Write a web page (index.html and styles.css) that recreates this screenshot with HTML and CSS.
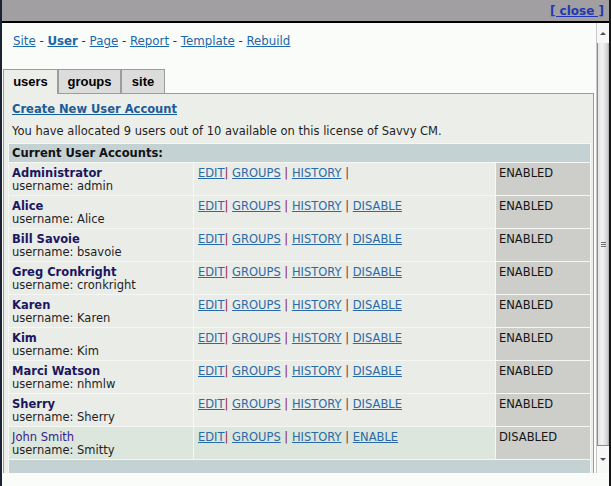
FILE: index.html
```html
<!DOCTYPE html>
<html>
<head>
<meta charset="utf-8">
<link rel="stylesheet" href="styles.css">
</head>
<body>
<div class="window">
  <div class="titlebar"><a class="close" href="#">[ close ]</a></div>
  <div class="frame">
    <div class="content">
      <div class="crumbs">
        <a href="#">Site</a> - <a href="#" class="current">User</a> - <a href="#">Page</a> - <a href="#">Report</a> - <a href="#">Template</a> - <a href="#">Rebuild</a>
      </div>
      <div class="tabs">
        <div class="tab tab-users active">users</div>
        <div class="tab tab-groups">groups</div>
        <div class="tab tab-site">site</div>
      </div>
      <div class="panel">
        <a class="create" href="#">Create New User Account</a>
        <p class="alloc">You have allocated 9 users out of 10 available on this license of Savvy CM.</p>
        <table class="users">
          <tr><th colspan="3">Current User Accounts:</th></tr>
          <tr>
            <td class="who"><span class="name">Administrator</span><br>username: admin</td>
            <td class="acts"><a href="#">EDIT</a><span class="sep">|</span> <a href="#">GROUPS</a> <span class="sep">|</span> <a href="#">HISTORY</a> <span class="sep">|</span></td>
            <td class="status">ENABLED</td>
          </tr>
          <tr>
            <td class="who"><span class="name">Alice</span><br>username: Alice</td>
            <td class="acts"><a href="#">EDIT</a><span class="sep">|</span> <a href="#">GROUPS</a> <span class="sep">|</span> <a href="#">HISTORY</a> <span class="sep">|</span> <a href="#">DISABLE</a></td>
            <td class="status">ENABLED</td>
          </tr>
          <tr>
            <td class="who"><span class="name">Bill Savoie</span><br>username: bsavoie</td>
            <td class="acts"><a href="#">EDIT</a><span class="sep">|</span> <a href="#">GROUPS</a> <span class="sep">|</span> <a href="#">HISTORY</a> <span class="sep">|</span> <a href="#">DISABLE</a></td>
            <td class="status">ENABLED</td>
          </tr>
          <tr>
            <td class="who"><span class="name">Greg Cronkright</span><br>username: cronkright</td>
            <td class="acts"><a href="#">EDIT</a><span class="sep">|</span> <a href="#">GROUPS</a> <span class="sep">|</span> <a href="#">HISTORY</a> <span class="sep">|</span> <a href="#">DISABLE</a></td>
            <td class="status">ENABLED</td>
          </tr>
          <tr>
            <td class="who"><span class="name">Karen</span><br>username: Karen</td>
            <td class="acts"><a href="#">EDIT</a><span class="sep">|</span> <a href="#">GROUPS</a> <span class="sep">|</span> <a href="#">HISTORY</a> <span class="sep">|</span> <a href="#">DISABLE</a></td>
            <td class="status">ENABLED</td>
          </tr>
          <tr>
            <td class="who"><span class="name">Kim</span><br>username: Kim</td>
            <td class="acts"><a href="#">EDIT</a><span class="sep">|</span> <a href="#">GROUPS</a> <span class="sep">|</span> <a href="#">HISTORY</a> <span class="sep">|</span> <a href="#">DISABLE</a></td>
            <td class="status">ENABLED</td>
          </tr>
          <tr>
            <td class="who"><span class="name">Marci Watson</span><br>username: nhmlw</td>
            <td class="acts"><a href="#">EDIT</a><span class="sep">|</span> <a href="#">GROUPS</a> <span class="sep">|</span> <a href="#">HISTORY</a> <span class="sep">|</span> <a href="#">DISABLE</a></td>
            <td class="status">ENABLED</td>
          </tr>
          <tr>
            <td class="who"><span class="name">Sherry</span><br>username: Sherry</td>
            <td class="acts"><a href="#">EDIT</a><span class="sep">|</span> <a href="#">GROUPS</a> <span class="sep">|</span> <a href="#">HISTORY</a> <span class="sep">|</span> <a href="#">DISABLE</a></td>
            <td class="status">ENABLED</td>
          </tr>
          <tr class="disabled">
            <td class="who"><span class="name">John Smith</span><br>username: Smitty</td>
            <td class="acts"><a href="#">EDIT</a><span class="sep">|</span> <a href="#">GROUPS</a> <span class="sep">|</span> <a href="#">HISTORY</a> <span class="sep">|</span> <a href="#">ENABLE</a></td>
            <td class="status">DISABLED</td>
          </tr>
          <tr><td class="foot" colspan="3"></td></tr>
        </table>
      </div>
    </div>
    <div class="scrollbar">
      <div class="sb-btn sb-up"><span class="arrow-up"></span></div>
      <div class="sb-track"><div class="sb-thumb"><span class="grip"></span></div></div>
      <div class="sb-btn sb-down"><span class="arrow-down"></span></div>
    </div>
  </div>
  <div class="bottom"></div>
</div>
</body>
</html>
```
FILE: styles.css
```css
* { box-sizing: border-box; }
html, body { margin: 0; padding: 0; }
body {
  width: 611px;
  height: 486px;
  overflow: hidden;
  background: #fafcf9;
  font-family: "DejaVu Sans", Verdana, sans-serif;
  color: #1a1a1a;
}
.window {
  width: 611px;
  height: 486px;
  border-left: 2px solid #1c2232;
  border-right: 2px solid #161616;
  display: flex;
  flex-direction: column;
  background: #fafcf9;
}
.titlebar {
  height: 23px;
  flex: none;
  background: #a19fa1;
  border-bottom: 2px solid #000;
  display: flex;
  justify-content: flex-end;
  align-items: center;
  padding-right: 5px;
}
.close {
  font-weight: bold;
  font-size: 12px;
  line-height: 14px;
  color: #2338b4;
  text-decoration: underline;
}
.frame {
  height: 450px;
  flex: none;
  display: flex;
}
.content {
  flex: 1;
  overflow: hidden;
  background: #fafcf9;
}
.crumbs {
  padding: 11px 0 0 11px;
  font-size: 11.8px;
  line-height: 14px;
  color: #333;
}
.crumbs a { color: #1a68aa; text-decoration: underline; }
.crumbs a.current { font-weight: bold; }
.tabs {
  display: flex;
  height: 24px;
  margin: 21px 0 0 1px;
  align-items: flex-start;
}
.tab {
  height: 24px;
  border: 1px solid #9c9c9c;
  border-bottom: none;
  background: #dcdcdc;
  font-family: "Liberation Sans", Arial, sans-serif;
  font-weight: bold;
  font-size: 13px;
  line-height: 23px;
  text-align: center;
  color: #000;
}
.tab-users { width: 55px; }
.tab-groups { width: 63px; }
.tab-site { width: 44px; }
.tab.active {
  background: #eceeea;
  height: 25px;
  position: relative;
  z-index: 1;
}
.panel {
  margin: 0 2px 0 1px;
  border: 1px solid #9c9c9c;
  background: #eceeea;
  padding-top: 8px;
  height: 400px;
}
.create {
  display: block;
  margin-left: 8px;
  font-weight: bold;
  font-size: 11.5px;
  line-height: 14px;
  color: #1a5c98;
  text-decoration: underline;
}
.alloc {
  margin: 8px 0 0 8px;
  font-size: 11.5px;
  line-height: 14px;
  color: #1e1e1e;
}
.users {
  margin: 5px 0 0 4px;
  width: 583px;
  border-collapse: separate;
  border-spacing: 1px;
  background: #f5f7f4;
  font-size: 11.5px;
  line-height: 13px;
}
.users th {
  height: 18px;
  padding: 0 3px;
  background: #c4d2d4;
  text-align: left;
  font-weight: bold;
  color: #111;
}
.users td {
  height: 32px;
  padding: 4px 3px 0;
  vertical-align: top;
  background: #eaece8;
  color: #1e1e1e;
}
.users td.who { width: 184px; }
.users td.acts { width: 301px; padding-left: 4px; }
.users td.status { width: 94px; background: #cdcec9; color: #151515; }
.name { font-weight: bold; color: #1b1660; }
.acts a { color: #2a6aa6; text-decoration: underline; }
.sep { color: #8a1f45; }
.disabled td.who, .disabled td.acts { background: #dce6dc; }
.disabled .name { font-weight: normal; color: #3a1c8c; }
.users td.foot { height: 30px; background: #c4d2d4; padding: 0; }
.scrollbar {
  width: 13px;
  flex: none;
  display: flex;
  flex-direction: column;
  background: #f4f4f4;
  border-left: 1px solid #c8c8c8;
}
.sb-btn {
  display: flex;
  align-items: center;
  justify-content: center;
  background: #f7f7f7;
}
.sb-up { height: 20px; }
.sb-down { height: 27px; }
.arrow-up {
  width: 0; height: 0;
  border-left: 3px solid transparent;
  border-right: 3px solid transparent;
  border-bottom: 3px solid #505050;
}
.arrow-down {
  width: 0; height: 0;
  border-left: 3px solid transparent;
  border-right: 3px solid transparent;
  border-top: 3px solid #505050;
}
.sb-track { flex: 1; display: flex; }
.sb-thumb {
  flex: 1;
  border-left: 1px solid #8c8c8c;
  border-bottom: 1px solid #8c8c8c;
  background: linear-gradient(to right, #e4e4e4, #f4f4f4 40%, #d2d2d2 85%, #a8a8a8);
  display: flex;
  align-items: center;
  justify-content: center;
}
.grip {
  width: 5px;
  height: 5px;
  border-top: 1px solid #707070;
  border-bottom: 1px solid #707070;
  background: linear-gradient(#fff0 40%, #707070 40%, #707070 60%, #fff0 60%);
}
.bottom { flex: 1; background: #fafcf9; }
```
